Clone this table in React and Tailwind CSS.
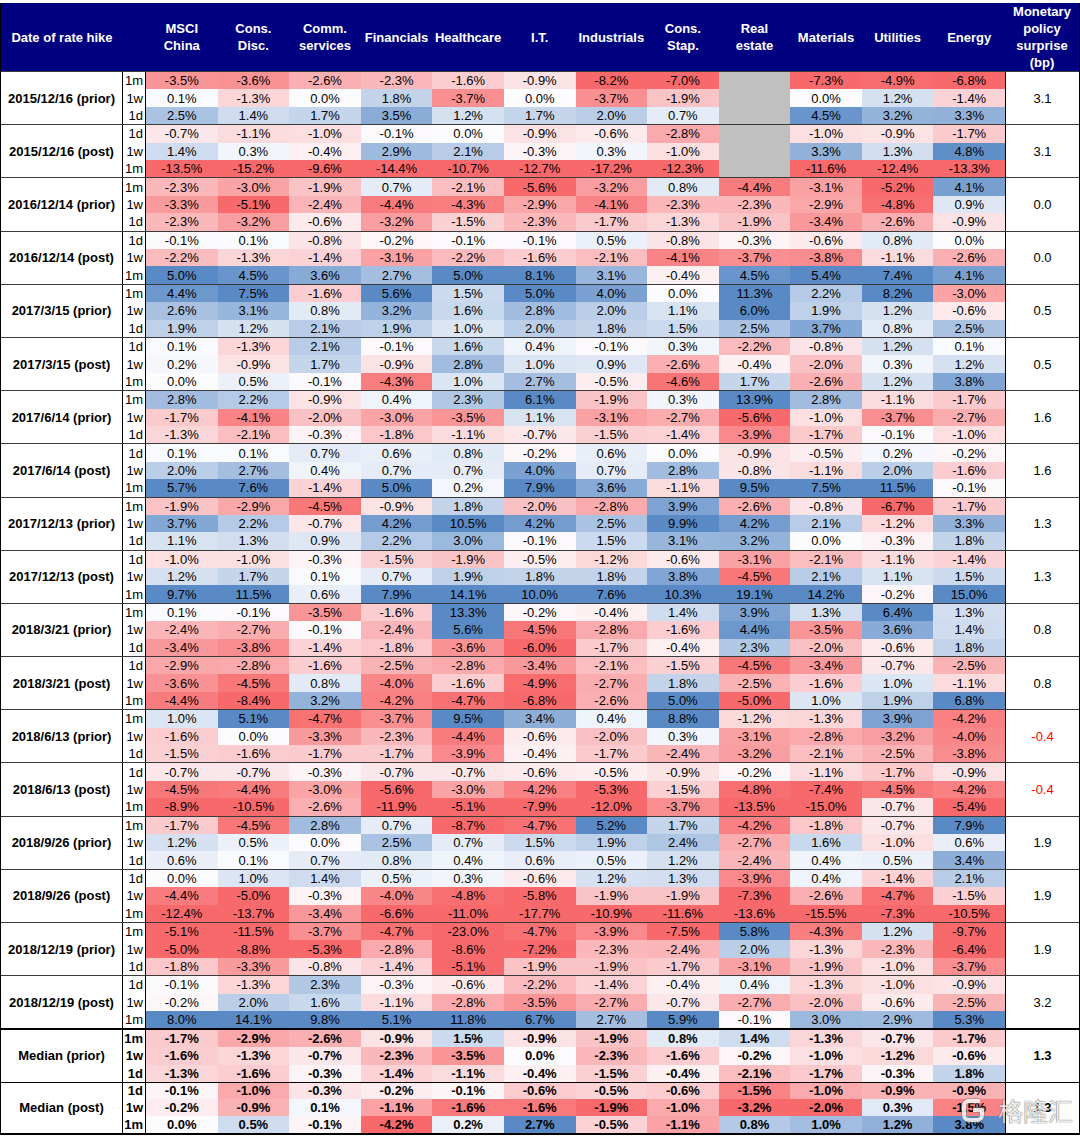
import React from "react";

// Excel-style 3 colour scale
const RED = [248, 105, 107];
const WHITE = [252, 252, 255];
const BLUE = [90, 138, 198];

const cellColor = (v, scale) => {
  if (v === null) return "#c0c0c0";
  const t = Math.min(Math.abs(v) / scale, 1);
  const end = v < 0 ? RED : BLUE;
  const c = WHITE.map((w, i) => Math.round(w + (end[i] - w) * t));
  return `rgb(${c.join(",")})`;
};

const headers = [
  ["MSCI", "China"],
  ["Cons.", "Disc."],
  ["Comm.", "services"],
  ["Financials"],
  ["Healthcare"],
  ["I.T."],
  ["Industrials"],
  ["Cons.", "Stap."],
  ["Real", "estate"],
  ["Materials"],
  ["Utilities"],
  ["Energy"],
];

const PRIOR = ["1m", "1w", "1d"];
const POST = ["1d", "1w", "1m"];
const _ = null;

const groups = [
  {
    date: "2015/12/16 (prior)", labels: PRIOR, bp: "3.1",
    rows: [
      [-3.5, -3.6, -2.6, -2.3, -1.6, -0.9, -8.2, -7.0, _, -7.3, -4.9, -6.8],
      [0.1, -1.3, 0.0, 1.8, -3.7, 0.0, -3.7, -1.9, _, 0.0, 1.2, -1.4],
      [2.5, 1.4, 1.7, 3.5, 1.2, 1.7, 2.0, 0.7, _, 4.5, 3.2, 3.3],
    ],
  },
  {
    date: "2015/12/16 (post)", labels: POST, bp: "3.1",
    rows: [
      [-0.7, -1.1, -1.0, -0.1, 0.0, -0.9, -0.6, -2.8, _, -1.0, -0.9, -1.7],
      [1.4, 0.3, -0.4, 2.9, 2.1, -0.3, 0.3, -1.0, _, 3.3, 1.3, 4.8],
      [-13.5, -15.2, -9.6, -14.4, -10.7, -12.7, -17.2, -12.3, _, -11.6, -12.4, -13.3],
    ],
  },
  {
    date: "2016/12/14 (prior)", labels: PRIOR, bp: "0.0",
    rows: [
      [-2.3, -3.0, -1.9, 0.7, -2.1, -5.6, -3.2, 0.8, -4.4, -3.1, -5.2, 4.1],
      [-3.3, -5.1, -2.4, -4.4, -4.3, -2.9, -4.1, -2.3, -2.3, -2.9, -4.8, 0.9],
      [-2.3, -3.2, -0.6, -3.2, -1.5, -2.3, -1.7, -1.3, -1.9, -3.4, -2.6, -0.9],
    ],
  },
  {
    date: "2016/12/14 (post)", labels: POST, bp: "0.0",
    rows: [
      [-0.1, 0.1, -0.8, -0.2, -0.1, -0.1, 0.5, -0.8, -0.3, -0.6, 0.8, 0.0],
      [-2.2, -1.3, -1.4, -3.1, -2.2, -1.6, -2.1, -4.1, -3.7, -3.8, -1.1, -2.6],
      [5.0, 4.5, 3.6, 2.7, 5.0, 8.1, 3.1, -0.4, 4.5, 5.4, 7.4, 4.1],
    ],
  },
  {
    date: "2017/3/15 (prior)", labels: PRIOR, bp: "0.5",
    rows: [
      [4.4, 7.5, -1.6, 5.6, 1.5, 5.0, 4.0, 0.0, 11.3, 2.2, 8.2, -3.0],
      [2.6, 3.1, 0.8, 3.2, 1.6, 2.8, 2.0, 1.1, 6.0, 1.9, 1.2, -0.6],
      [1.9, 1.2, 2.1, 1.9, 1.0, 2.0, 1.8, 1.5, 2.5, 3.7, 0.8, 2.5],
    ],
  },
  {
    date: "2017/3/15 (post)", labels: POST, bp: "0.5",
    rows: [
      [0.1, -1.3, 2.1, -0.1, 1.6, 0.4, -0.1, 0.3, -2.2, -0.8, 1.2, 0.1],
      [0.2, -0.9, 1.7, -0.9, 2.8, 1.0, 0.9, -2.6, -0.4, -2.0, 0.3, 1.2],
      [0.0, 0.5, -0.1, -4.3, 1.0, 2.7, -0.5, -4.6, 1.7, -2.6, 1.2, 3.8],
    ],
  },
  {
    date: "2017/6/14 (prior)", labels: PRIOR, bp: "1.6",
    rows: [
      [2.8, 2.2, -0.9, 0.4, 2.3, 6.1, -1.9, 0.3, 13.9, 2.8, -1.1, -1.7],
      [-1.7, -4.1, -2.0, -3.0, -3.5, 1.1, -3.1, -2.7, -5.6, -1.0, -3.7, -2.7],
      [-1.3, -2.1, -0.3, -1.8, -1.1, -0.7, -1.5, -1.4, -3.9, -1.7, -0.1, -1.0],
    ],
  },
  {
    date: "2017/6/14 (post)", labels: POST, bp: "1.6",
    rows: [
      [0.1, 0.1, 0.7, 0.6, 0.8, -0.2, 0.6, 0.0, -0.9, -0.5, 0.2, -0.2],
      [2.0, 2.7, 0.4, 0.7, 0.7, 4.0, 0.7, 2.8, -0.8, -1.1, 2.0, -1.6],
      [5.7, 7.6, -1.4, 5.0, 0.2, 7.9, 3.6, -1.1, 9.5, 7.5, 11.5, -0.1],
    ],
  },
  {
    date: "2017/12/13 (prior)", labels: PRIOR, bp: "1.3",
    rows: [
      [-1.9, -2.9, -4.5, -0.9, 1.8, -2.0, -2.8, 3.9, -2.6, -0.8, -6.7, -1.7],
      [3.7, 2.2, -0.7, 4.2, 10.5, 4.2, 2.5, 9.9, 4.2, 2.1, -1.2, 3.3],
      [1.1, 1.3, 0.9, 2.2, 3.0, -0.1, 1.5, 3.1, 3.2, 0.0, -0.3, 1.8],
    ],
  },
  {
    date: "2017/12/13 (post)", labels: POST, bp: "1.3",
    rows: [
      [-1.0, -1.0, -0.3, -1.5, -1.9, -0.5, -1.2, -0.6, -3.1, -2.1, -1.1, -1.4],
      [1.2, 1.7, 0.1, 0.7, 1.9, 1.8, 1.8, 3.8, -4.5, 2.1, 1.1, 1.5],
      [9.7, 11.5, 0.6, 7.9, 14.1, 10.0, 7.6, 10.3, 19.1, 14.2, -0.2, 15.0],
    ],
  },
  {
    date: "2018/3/21 (prior)", labels: PRIOR, bp: "0.8",
    rows: [
      [0.1, -0.1, -3.5, -1.6, 13.3, -0.2, -0.4, 1.4, 3.9, 1.3, 6.4, 1.3],
      [-2.4, -2.7, -0.1, -2.4, 5.6, -4.5, -2.8, -1.6, 4.4, -3.5, 3.6, 1.4],
      [-3.4, -3.8, -1.4, -1.8, -3.6, -6.0, -1.7, -0.4, 2.3, -2.0, -0.6, 1.8],
    ],
  },
  {
    date: "2018/3/21 (post)", labels: POST, bp: "0.8",
    rows: [
      [-2.9, -2.8, -1.6, -2.5, -2.8, -3.4, -2.1, -1.5, -4.5, -3.4, -0.7, -2.5],
      [-3.6, -4.5, 0.8, -4.0, -1.6, -4.9, -2.7, 1.8, -2.5, -1.6, 1.0, -1.1],
      [-4.4, -8.4, 3.2, -4.2, -4.7, -6.8, -2.6, 5.0, -5.0, 1.0, 1.9, 6.8],
    ],
  },
  {
    date: "2018/6/13 (prior)", labels: PRIOR, bp: "-0.4", red: true,
    rows: [
      [1.0, 5.1, -4.7, -3.7, 9.5, 3.4, 0.4, 8.8, -1.2, -1.3, 3.9, -4.2],
      [-1.6, 0.0, -3.3, -2.3, -4.4, -0.6, -2.0, 0.3, -3.1, -2.8, -3.2, -4.0],
      [-1.5, -1.6, -1.7, -1.7, -3.9, -0.4, -1.7, -2.4, -3.2, -2.1, -2.5, -3.8],
    ],
  },
  {
    date: "2018/6/13 (post)", labels: POST, bp: "-0.4", red: true,
    rows: [
      [-0.7, -0.7, -0.3, -0.7, -0.7, -0.6, -0.5, -0.9, -0.2, -1.1, -1.7, -0.9],
      [-4.5, -4.4, -3.0, -5.6, -3.0, -4.2, -5.3, -1.5, -4.8, -7.4, -4.5, -4.2],
      [-8.9, -10.5, -2.6, -11.9, -5.1, -7.9, -12.0, -3.7, -13.5, -15.0, -0.7, -5.4],
    ],
  },
  {
    date: "2018/9/26 (prior)", labels: PRIOR, bp: "1.9",
    rows: [
      [-1.7, -4.5, 2.8, 0.7, -8.7, -4.7, 5.2, 1.7, -4.2, -1.8, -0.7, 7.9],
      [1.2, 0.5, 0.0, 2.5, 0.7, 1.5, 1.9, 2.4, -2.7, 1.6, -1.0, 0.6],
      [0.6, 0.1, 0.7, 0.8, 0.4, 0.6, 0.5, 1.2, -2.4, 0.4, 0.5, 3.4],
    ],
  },
  {
    date: "2018/9/26 (post)", labels: POST, bp: "1.9",
    rows: [
      [0.0, 1.0, 1.4, 0.5, 0.3, -0.6, 1.2, 1.3, -3.9, 0.4, -1.4, 2.1],
      [-4.4, -5.0, -0.3, -4.0, -4.8, -5.8, -1.9, -1.9, -7.3, -2.6, -4.7, -1.5],
      [-12.4, -13.7, -3.4, -6.6, -11.0, -17.7, -10.9, -11.6, -13.6, -15.5, -7.3, -10.5],
    ],
  },
  {
    date: "2018/12/19 (prior)", labels: PRIOR, bp: "1.9",
    rows: [
      [-5.1, -11.5, -3.7, -4.7, -23.0, -4.7, -3.9, -7.5, 5.8, -4.3, 1.2, -9.7],
      [-5.0, -8.8, -5.3, -2.8, -8.6, -7.2, -2.3, -2.4, 2.0, -1.3, -2.3, -6.4],
      [-1.8, -3.3, -0.8, -1.4, -5.1, -1.9, -1.9, -1.7, -3.1, -1.9, -1.0, -3.7],
    ],
  },
  {
    date: "2018/12/19 (post)", labels: POST, bp: "3.2",
    rows: [
      [-0.1, -1.3, 2.3, -0.3, -0.6, -2.2, -1.4, -0.4, 0.4, -1.3, -1.0, -0.9],
      [-0.2, 2.0, 1.6, -1.1, -2.8, -3.5, -2.7, -0.7, -2.7, -2.0, -0.6, -2.5],
      [8.0, 14.1, 9.8, 5.1, 11.8, 6.7, 2.7, 5.9, -0.1, 3.0, 2.9, 5.3],
    ],
  },
  {
    date: "Median (prior)", labels: PRIOR, bp: "1.3", bold: true, first: true,
    rows: [
      [-1.7, -2.9, -2.6, -0.9, 1.5, -0.9, -1.9, 0.8, 1.4, -1.3, -0.7, -1.7],
      [-1.6, -1.3, -0.7, -2.3, -3.5, 0.0, -2.3, -1.6, -0.2, -1.0, -1.2, -0.6],
      [-1.3, -1.6, -0.3, -1.4, -1.1, -0.4, -1.5, -0.4, -2.1, -1.7, -0.3, 1.8],
    ],
  },
  {
    date: "Median (post)", labels: POST, bp: "1.3", bold: true, scale: 1.8,
    rows: [
      [-0.1, -1.0, -0.3, -0.2, -0.1, -0.6, -0.5, -0.6, -1.5, -1.0, -0.9, -0.9],
      [-0.2, -0.9, 0.1, -1.1, -1.6, -1.6, -1.9, -1.0, -3.2, -2.0, 0.3, -1.5],
      [0.0, 0.5, -0.1, -4.2, 0.2, 2.7, -0.5, -1.1, 0.8, 1.0, 1.2, 3.8],
    ],
  },
];

const GRID = "grid grid-cols-[122px_23px_repeat(12,minmax(0,1fr))_74px]";

const Group = ({ g, last }) => {
  const scale = g.scale || 5;
  const weight = g.bold ? "font-bold" : "font-normal";
  const cells = [];
  cells.push(
    <div key="date" className="row-span-3 flex items-center justify-center border-r border-black font-bold">
      {g.date}
    </div>
  );
  g.rows.forEach((row, r) => {
    cells.push(
      <div key={`l${r}`} className={`flex items-center justify-end pr-[2px] border-r border-black ${weight}`}>
        {g.labels[r]}
      </div>
    );
    row.forEach((v, c) => {
      cells.push(
        <div
          key={`${r}-${c}`}
          className={`flex items-center justify-center ${weight}`}
          style={{ backgroundColor: cellColor(v, scale) }}
        >
          {v === null ? "" : `${v.toFixed(1)}%`}
        </div>
      );
    });
    if (r === 0) {
      cells.push(
        <div
          key="bp"
          className={`row-span-3 flex items-center justify-center border-l border-black ${weight} ${g.red ? "text-[#ff0000]" : ""}`}
        >
          {g.bp}
        </div>
      );
    }
  });
  return (
    <div
      className={`${GRID} grid-rows-3 h-[53.2px] ${g.first ? "border-t-2 border-black" : "border-t border-[#3a3a3a]"} ${last ? "border-b-2 border-black" : ""}`}
    >
      {cells}
    </div>
  );
};

const Watermark = () => (
  <div className="absolute right-[6px] bottom-[10px] flex items-end gap-[12px] pointer-events-none opacity-90">
    <svg width="26" height="30" viewBox="0 0 26 30">
      <path
        d="M20 6 H9 a5 5 0 0 0 -5 5 V20 a5 5 0 0 0 5 5 H17 a5 5 0 0 0 5 -5 V15 H13"
        fill="none"
        stroke="rgba(120,120,120,0.55)"
        strokeWidth="6"
        strokeLinejoin="round"
      />
      <path
        d="M20 6 H9 a5 5 0 0 0 -5 5 V20 a5 5 0 0 0 5 5 H17 a5 5 0 0 0 5 -5 V15 H13"
        fill="none"
        stroke="rgba(255,255,255,0.9)"
        strokeWidth="4"
        strokeLinejoin="round"
      />
    </svg>
    <span className="font-['Noto_Sans_CJK_SC',sans-serif] text-[25px] leading-[30px] text-white/90 [text-shadow:0_0_1px_rgba(0,0,0,0.6),0_0_1px_rgba(0,0,0,0.6)]">
      格隆汇
    </span>
  </div>
);

export default function App() {
  return (
    <div className="w-[1080px] h-[1138px] bg-white pt-[3px] font-['Liberation_Sans',Arial,sans-serif] text-[13px] text-black leading-none overflow-hidden">
      <div className="relative border-l border-r border-black">
        <div className={`${GRID} h-[68px] bg-[#000080] text-white font-bold leading-[17px]`}>
          <div className="flex items-center justify-center">Date of rate hike</div>
          <div />
          {headers.map((h, i) => (
            <div key={i} className="flex flex-col items-center justify-center text-center">
              {h.map((line) => (
                <span key={line}>{line}</span>
              ))}
            </div>
          ))}
          <div className="flex flex-col items-center justify-center text-center">
            <span>Monetary</span>
            <span>policy</span>
            <span>surprise</span>
            <span>(bp)</span>
          </div>
        </div>
        {groups.map((g, i) => (
          <Group key={g.date} g={g} last={i === groups.length - 1} />
        ))}
        <Watermark />
      </div>
    </div>
  );
}
